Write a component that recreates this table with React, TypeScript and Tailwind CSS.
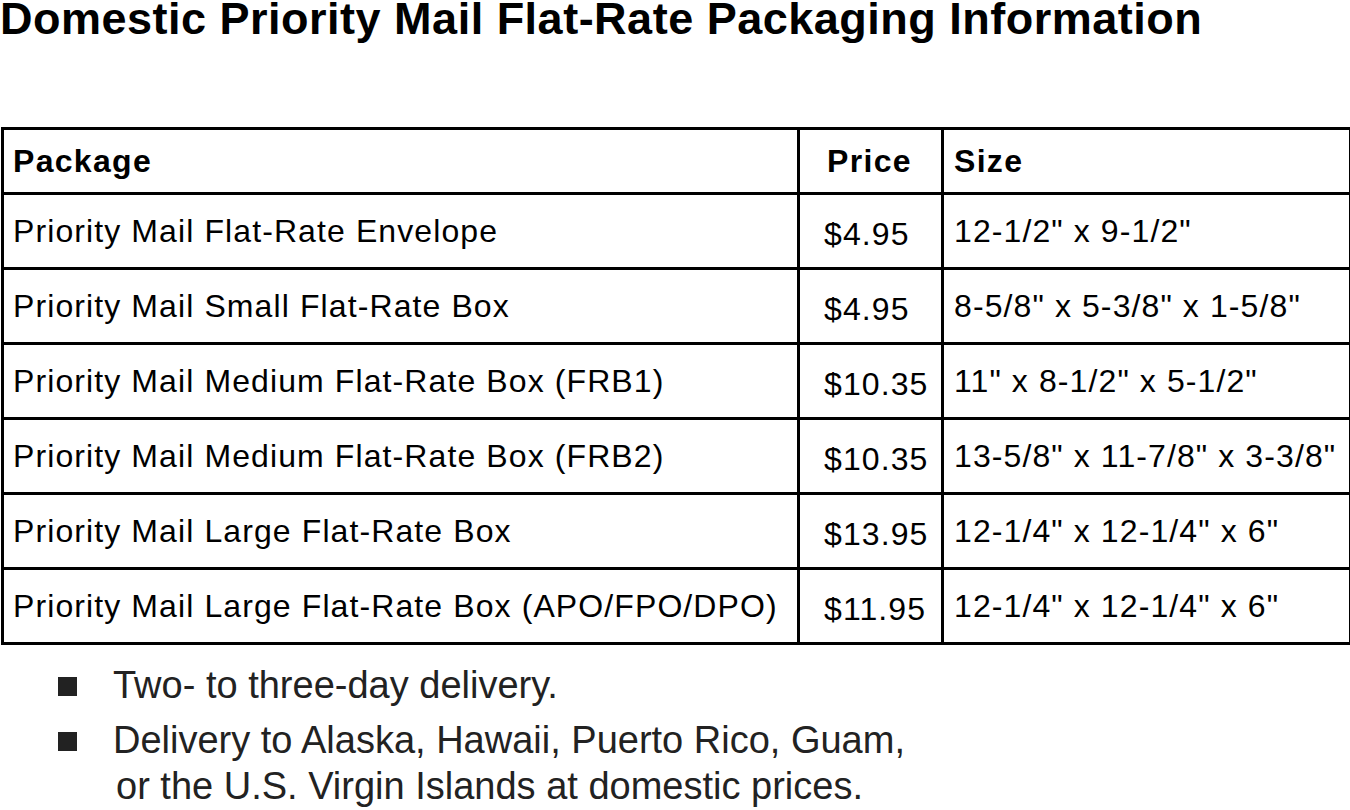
const rows = [
  { pkg: "Priority Mail Flat-Rate Envelope", price: "$4.95", size: "12-1/2\" x 9-1/2\"" },
  { pkg: "Priority Mail Small Flat-Rate Box", price: "$4.95", size: "8-5/8\" x 5-3/8\" x 1-5/8\"" },
  { pkg: "Priority Mail Medium Flat-Rate Box (FRB1)", price: "$10.35", size: "11\" x 8-1/2\" x 5-1/2\"" },
  { pkg: "Priority Mail Medium Flat-Rate Box (FRB2)", price: "$10.35", size: "13-5/8\" x 11-7/8\" x 3-3/8\"" },
  { pkg: "Priority Mail Large Flat-Rate Box", price: "$13.95", size: "12-1/4\" x 12-1/4\" x 6\"" },
  { pkg: "Priority Mail Large Flat-Rate Box (APO/FPO/DPO)", price: "$11.95", size: "12-1/4\" x 12-1/4\" x 6\"" },
];

export default function App() {
  return (
    <div className="w-[1350px] h-[810px] bg-white text-black font-['Liberation_Sans',Arial,sans-serif]">
      <h1 className="text-[45px] font-bold leading-[38px] tracking-[0.5px]">
        Domestic Priority Mail Flat-Rate Packaging Information
      </h1>

      <table className="mt-[89px] ml-[1px] w-[1348px] border-collapse border-[3px] border-black table-fixed">
        <colgroup>
          <col className="w-[796px]" />
          <col className="w-[144px]" />
          <col className="w-[408px]" />
        </colgroup>
        <thead>
          <tr className="h-[65px] text-[32px] leading-[36px] font-bold tracking-[1.3px]">
            <th className="border-[3px] border-black text-left pl-[9px]">Package</th>
            <th className="border-[3px] border-black text-center pr-[2px]">Price</th>
            <th className="border-[3px] border-black text-left pl-[10px]">Size</th>
          </tr>
        </thead>
        <tbody>
          {rows.map((r, i) => (
            <tr key={i} className="h-[75px] text-[32px] leading-[36px] tracking-[1.1px]">
              <td className="border-[3px] border-black pl-[9px] whitespace-nowrap">{r.pkg}</td>
              <td className="border-[3px] border-black pl-[24px] pt-[6px] whitespace-nowrap">{r.price}</td>
              <td className="border-[3px] border-black pl-[10px] whitespace-nowrap">{r.size}</td>
            </tr>
          ))}
        </tbody>
      </table>

      <ul className="mt-[17px] text-[38px] text-[#222] leading-[46px]">
        <li className="flex">
          <span className="w-[19px] h-[19px] bg-[#222] mt-[15px] ml-[58px] mr-[36px] shrink-0" />
          <span>Two- to three-day delivery.</span>
        </li>
        <li className="flex mt-[9px]">
          <span className="w-[19px] h-[19px] bg-[#222] mt-[15px] ml-[58px] mr-[36px] shrink-0" />
          <span>
            Delivery to Alaska, Hawaii, Puerto Rico, Guam,
            <br />
            <span className="pl-[3px]">or the U.S. Virgin Islands at domestic prices.</span>
          </span>
        </li>
      </ul>
    </div>
  );
}
